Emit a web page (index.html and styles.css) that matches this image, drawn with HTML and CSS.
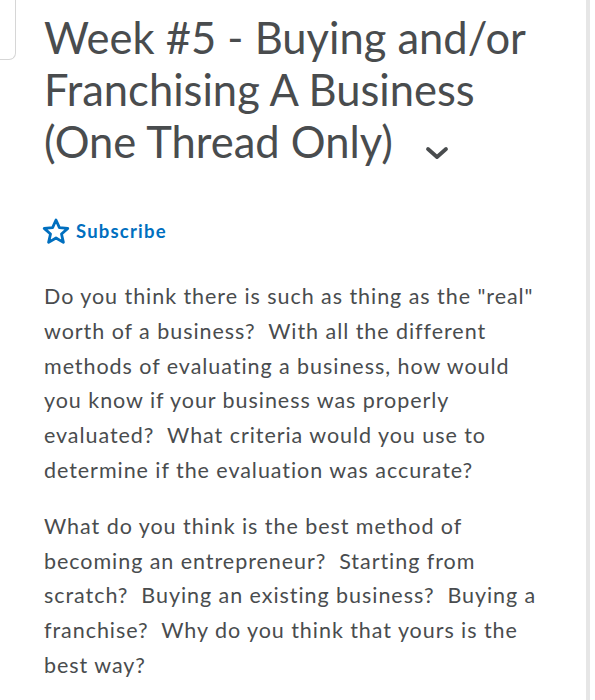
FILE: index.html
```html
<!DOCTYPE html>
<html lang="en">
<head>
<meta charset="utf-8">
<title>Week #5 - Buying and/or Franchising A Business</title>
<link rel="stylesheet" href="styles.css">
</head>
<body>
<div class="page">
  <div class="side">
    <div class="stub"></div>
  </div>
  <main class="content">
    <h1 class="title">Week #5 - Buying and/or Franchising A Business (One Thread Only)<span class="chev"><svg width="24" height="14" viewBox="0 0 24 14"><path d="M3 3 L12 11 L21 3" fill="none" stroke="#494c4e" stroke-width="3.8" stroke-linecap="round" stroke-linejoin="round"/></svg></span></h1>
    <div class="subscribe">
      <svg class="star" width="28" height="27" viewBox="0 0 28 27"><path d="M14 2 L17.4 9.6 L25.8 10.4 L19.5 16 L21.4 24.4 L14 20 L6.6 24.4 L8.5 16 L2.2 10.4 L10.6 9.6 Z" fill="none" stroke="#006fbf" stroke-width="2.8" stroke-linejoin="round"/></svg>
      <span class="sub-label">Subscribe</span>
    </div>
    <div class="body">
      <p>Do you think there is such as thing as the "real" worth of a business?&nbsp; With all the different methods of evaluating a business, how would you know if your business was properly evaluated?&nbsp; What criteria would you use to determine if the evaluation was accurate?</p>
      <p>What do you think is the best method of becoming an entrepreneur?&nbsp; Starting from scratch?&nbsp; Buying an existing business?&nbsp; Buying a franchise?&nbsp; Why do you think that yours is the best way?</p>
    </div>
  </main>
  <div class="rail"></div>
</div>
</body>
</html>
```

FILE: styles.css
```css
html, body {
  margin: 0;
  padding: 0;
  background: #ffffff;
}

.page {
  display: flex;
  width: 595px;
  height: 700px;
  overflow: hidden;
  font-family: Lato, "Open Sans", sans-serif;
  color: #494c4e;
}

.side {
  width: 16px;
  flex: none;
}

.stub {
  height: 60px;
  border: 1px solid #d6d6d6;
  border-top: none;
  border-left: none;
  border-bottom-right-radius: 7px;
  box-sizing: border-box;
}

.content {
  flex: 1;
  padding: 11px 0 0 28px;
  min-width: 0;
}

.title {
  margin: 0;
  font-size: 43.5px;
  line-height: 52px;
  font-weight: 400;
  width: 500px;
}

.chev {
  display: inline-block;
  margin-left: 32px;
  vertical-align: -2px;
}

.subscribe {
  display: flex;
  align-items: center;
  gap: 6px;
  margin-top: 49px;
  height: 26px;
  color: #006fbf;
}

.star {
  display: block;
  margin-left: -2px;
}

.sub-label {
  font-size: 18.5px;
  font-weight: 700;
  letter-spacing: 1.2px;
}

.body {
  margin-top: 35px;
  width: 500px;
}

.body p {
  margin: 0 0 21px;
  font-size: 21.5px;
  line-height: 34.8px;
  letter-spacing: 0.95px;
}

.rail {
  width: 4px;
  flex: none;
  margin-right: 5px;
  background: #e6e6e6;
}
```
